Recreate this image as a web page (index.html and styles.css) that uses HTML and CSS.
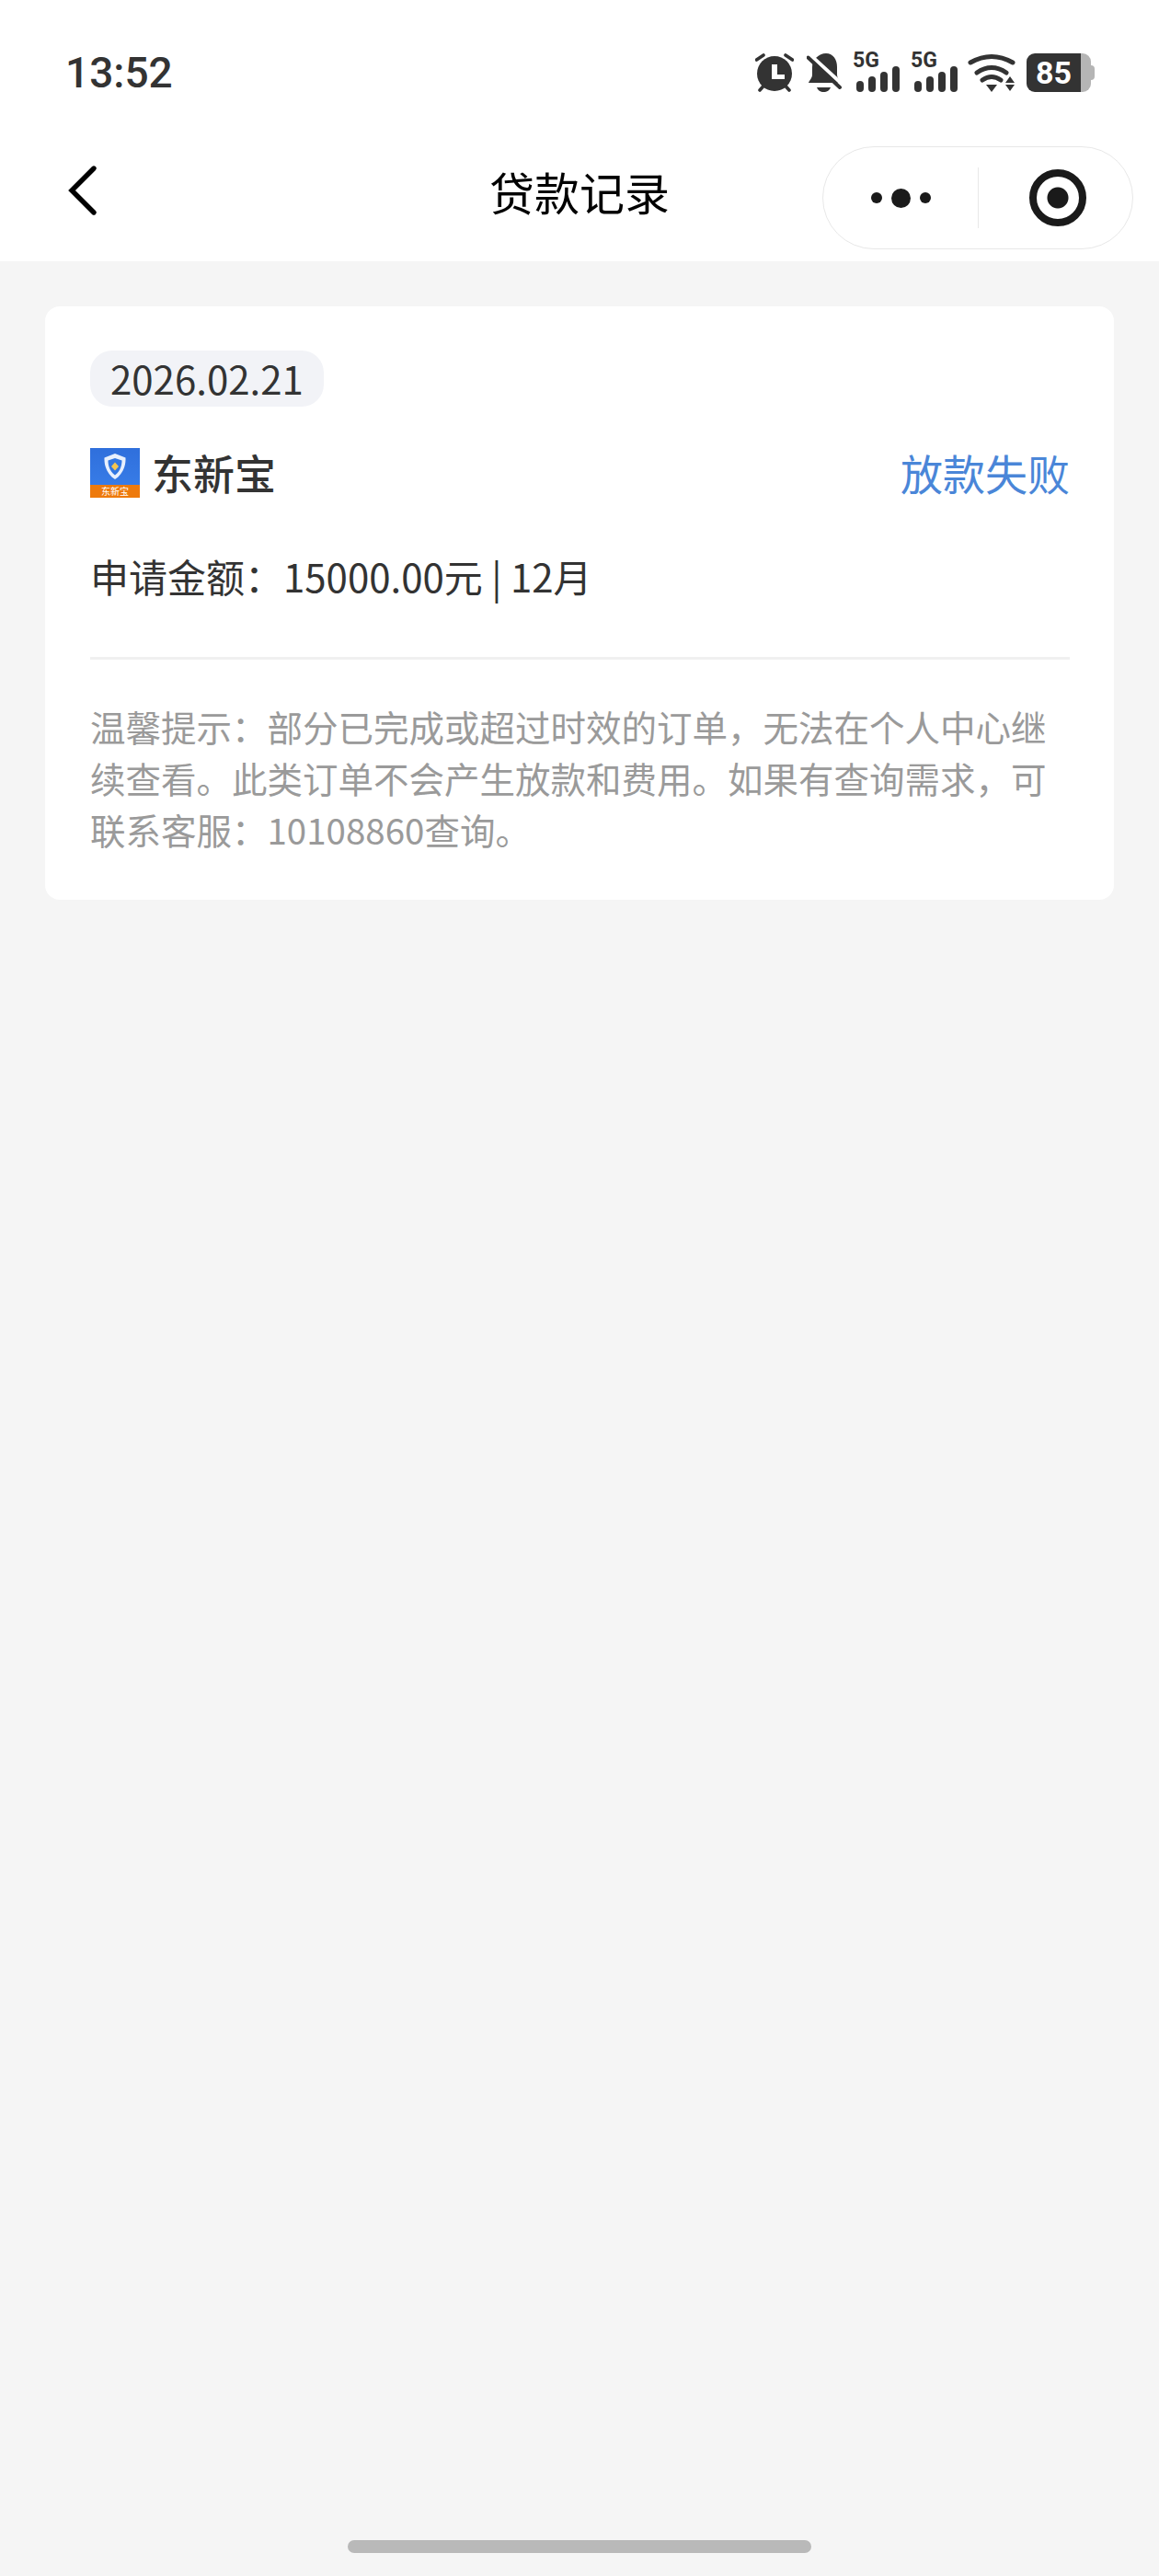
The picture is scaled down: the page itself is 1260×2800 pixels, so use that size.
FILE: index.html
```html
<!DOCTYPE html>
<html lang="zh-CN">
<head>
<meta charset="utf-8">
<title>贷款记录</title>
<link rel="stylesheet" href="styles.css">
</head>
<body>
<div class="phone">
  <header class="topbar">
    <div class="status">
      <span class="clock">13:52</span>
      <div class="status-icons">
        <svg class="ic-alarm" viewBox="0 0 42 42"><path d="M1.500 7 9 2M40.500 7 33 2M5 40l4-4.500M37 40l-4-4.500" stroke="#333" stroke-width="3.600" stroke-linecap="round" fill="none"/><circle cx="21" cy="22" r="19" fill="#333"/><path d="M18 12h6v11h8v5H18z" fill="#fff"/></svg>
        <svg class="ic-bell" viewBox="0 0 38 42"><path d="M21 0c8 0 12 7 12 15v8c0 4 3 6 4 9H2c1-3 4-5 4-9V15C6 7 13 0 21 0zM11 37h15c-1 3-4 5-7.500 5S12 40 11 37z" fill="#333"/><path d="M3 1 38 33" stroke="#fff" stroke-width="4"/><path d="M1.500 4.500 36 37" stroke="#333" stroke-width="4" stroke-linecap="round"/></svg>
        <div class="signal">
          <span class="net">5G</span>
          <div class="bars"><i class="b1"></i><i class="b2"></i><i class="b3"></i><i class="b4"></i></div>
        </div>
        <div class="signal">
          <span class="net">5G</span>
          <div class="bars"><i class="b1"></i><i class="b2"></i><i class="b3"></i><i class="b4"></i></div>
        </div>
        <svg class="ic-wifi" viewBox="0 0 53 42"><path d="M3 10Q26-3 49 10M10 21Q26 10 42 21M16 29Q26 22 36 29" stroke="#333" stroke-width="5" fill="none" stroke-linecap="round"/><path d="M20 34h12l-6 8zM41 32l5-7 5 7zM41 34h10l-5 7z" fill="#333"/></svg>
        <div class="battery"><span class="level">85</span><span class="rest"></span><span class="nub"></span></div>
      </div>
    </div>
    <nav class="navbar">
      <svg class="back" viewBox="0 0 34 56"><path d="M29 4 5 28 29 52" stroke="#000" stroke-width="5.400" stroke-linecap="round" fill="none"/></svg>
      <h1 class="title">贷款记录</h1>
      <div class="capsule">
        <div class="more"><i></i><i class="big"></i><i></i></div>
        <span class="split"></span>
        <div class="target"><i></i></div>
      </div>
    </nav>
  </header>
  <main class="content">
    <section class="card">
      <div class="date">2026.02.21</div>
      <div class="row">
        <div class="brand">
          <div class="logo">
            <svg class="shield" viewBox="0 0 26 30"><path d="M13 1 24.500 5.500C25 15 21 24 13 29 5 24 1 15 1.500 5.500z" fill="#e8f0fd"/><path d="M13 6 20.500 8.500C20.500 15 18 21 13 24.500 8 21 5.500 15 5.500 8.500z" fill="#3277e2"/><path d="M13 10.500 17 15l-4 4.500L9 15z" fill="#f5c64f"/></svg>
            <span class="logo-name">东新宝</span>
          </div>
          <span class="name">东新宝</span>
        </div>
        <span class="state">放款失败</span>
      </div>
      <p class="amount">申请金额：15000.00元 | 12月</p>
      <p class="tip">温馨提示：部分已完成或超过时效的订单，无法在个人中心继续查看。此类订单不会产生放款和费用。如果有查询需求，可联系客服：10108860查询。</p>
    </section>
  </main>
  <div class="home-bar"></div>
</div>
</body>
</html>
```
FILE: styles.css
```css
* { box-sizing: border-box; }
html, body { margin: 0; padding: 0; }
body { font-family: "Noto Sans CJK SC", "Noto Sans", sans-serif; background: #f5f5f5; }
.phone { width: 1260px; height: 2800px; display: flex; flex-direction: column; background: #f5f5f5; }

/* status bar */
.topbar { background: #fff; height: 284px; flex: none; }
.status { height: 140px; padding: 18px 70px 0 71px; display: flex; justify-content: space-between; align-items: center; }
.clock { font-family: "Roboto", "Noto Sans", sans-serif; font-size: 46px; font-weight: 500; color: #333; }
.status-icons { display: flex; align-items: center; gap: 12px; }
.ic-alarm { width: 42px; height: 42px; }
.ic-bell { width: 38px; height: 42px; margin-left: 2px; }
.ic-wifi { width: 53px; height: 42px; margin-left: -1px; }
.signal { width: 51px; height: 42px; display: flex; flex-direction: column; justify-content: space-between; }
.net { font: 700 23px/16px "Roboto", sans-serif; color: #333; }
.bars { display: flex; align-items: flex-end; justify-content: flex-end; gap: 5px; margin-top: -14px; }
.bars i { display: block; width: 8px; background: #333; border-radius: 4px; }
.bars .b1 { height: 12px; }
.bars .b2 { height: 17px; }
.bars .b3 { height: 22px; }
.bars .b4 { height: 28px; }
.battery { display: flex; align-items: center; margin-left: -1px; height: 42px; }
.level { width: 59px; height: 42px; background: #333; color: #fff; border-radius: 9px 0 0 9px; font: 700 34px/42px "Roboto", sans-serif; text-align: center; }
.rest { width: 11px; height: 42px; background: #b5b5b5; border-radius: 0 9px 9px 0; }
.nub { width: 4px; height: 16px; background: #b5b5b5; border-radius: 0 4px 4px 0; }

/* navigation bar */
.navbar { height: 144px; display: grid; grid-template-columns: 1fr auto 1fr; align-items: center; padding: 0 28px; }
.back { width: 34px; height: 56px; margin: 0 0 11px 45px; }
.title { margin: 0 0 8px; font-size: 49px; line-height: 70px; font-weight: 400; color: #000; }
.capsule { justify-self: end; width: 338px; height: 112px; margin-top: 6px; border: 1px solid #e8e8e8; border-radius: 56px; display: flex; align-items: center; background: #fff; }
.more { width: 168px; display: flex; justify-content: center; align-items: center; gap: 10px; }
.more i { width: 12px; height: 12px; background: #1a1a1a; border-radius: 50%; }
.more .big { width: 21px; height: 21px; }
.split { width: 1px; height: 66px; background: #e8e8e8; }
.target { flex: 1; display: flex; justify-content: center; align-items: center; padding-left: 4px; }
.target i { display: block; width: 62px; height: 62px; border: 8px solid #1a1a1a; border-radius: 50%; background: radial-gradient(circle, #1a1a1a 11px, #fff 12px); }

/* record card */
.content { flex: 1; padding: 49px 49px 0; }
.card { background: #fff; border-radius: 16px; height: 645px; padding: 48px 48px 0 49px; }
.date { width: fit-content; height: 61px; line-height: 59px; padding: 0 22px; background: #f2f3f7; border-radius: 24px; font-size: 42px; color: #333; font-weight: 400; }
.row { display: flex; justify-content: space-between; align-items: center; margin-top: 42px; height: 60px; }
.brand { display: flex; align-items: center; gap: 13px; }
.logo { width: 54px; height: 54px; background: linear-gradient(#2f6fdc, #3a80ea); position: relative; display: flex; justify-content: center; overflow: hidden; }
.shield { width: 26px; height: 30px; margin-top: 5px; }
.logo-name { position: absolute; left: 0; right: 0; bottom: 0; height: 14px; background: #ee7a0c; color: #fff; font-size: 10px; line-height: 14px; text-align: center; }
.name { font-size: 45px; font-weight: 500; color: #333; line-height: 60px; }
.state { font-size: 46px; color: #4a86d8; line-height: 60px; margin-bottom: 2px; }
.amount { margin: 51px 0 0; font-size: 42px; line-height: 62px; color: #333; font-weight: 400; }
.tip { margin: 57px 0 0; padding-top: 44px; border-top: 3px solid #f0f0f0; font-size: 38.500px; line-height: 56px; color: #9a9a9a; font-weight: 400; }

.home-bar { flex: none; width: 504px; height: 14px; margin: 0 auto 25px; background: #b9b9b9; border-radius: 7px; }
```
